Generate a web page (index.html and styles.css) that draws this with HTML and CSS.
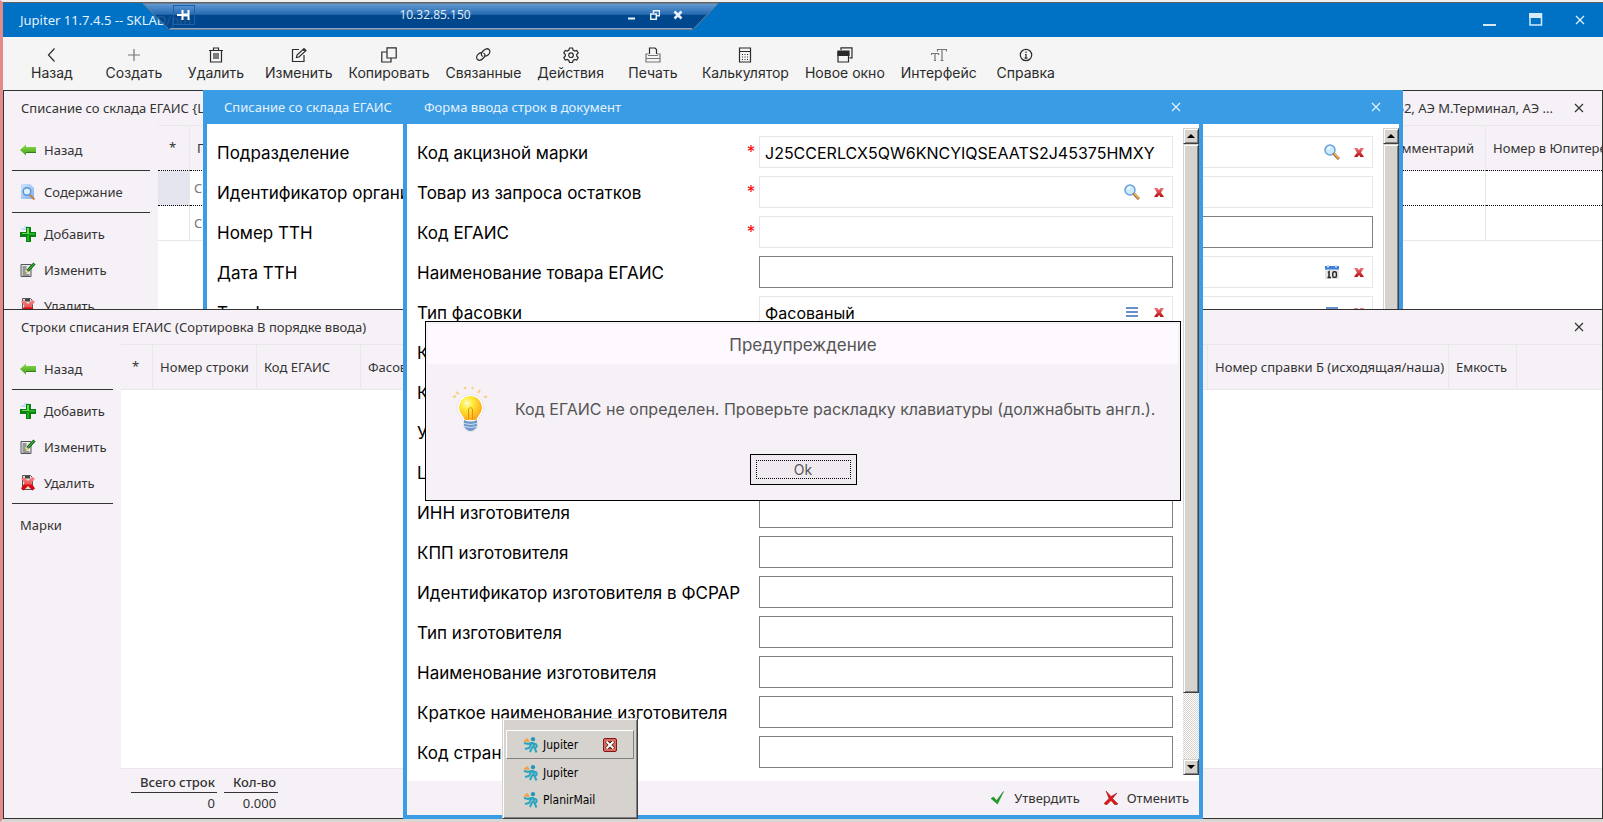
FILE: index.html
```html
<!DOCTYPE html>
<html lang="ru">
<head>
<meta charset="utf-8">
<title>Jupiter 11.7.4.5</title>
<link rel="stylesheet" href="styles.css">
</head>
<body>
<svg class="defs" aria-hidden="true">
  <linearGradient id="gGreen" x1="0" y1="0" x2="0" y2="1"><stop offset="0" stop-color="#8fe04a"/><stop offset="1" stop-color="#3f9a1c"/></linearGradient>
  <linearGradient id="gRed" x1="0" y1="0" x2="0" y2="1"><stop offset="0" stop-color="#f0787a"/><stop offset="1" stop-color="#b80a10"/></linearGradient>
  <linearGradient id="gDel" x1="0" y1="0" x2="0" y2="1"><stop offset="0" stop-color="#f48a8a"/><stop offset=".5" stop-color="#ee5558"/><stop offset=".6" stop-color="#e00c10"/><stop offset="1" stop-color="#c00808"/></linearGradient>
  <linearGradient id="gDoc" x1="0" y1="0" x2="1" y2="1"><stop offset="0" stop-color="#cfe3fb"/><stop offset="1" stop-color="#7fb2ee"/></linearGradient>
  <radialGradient id="gBulb" cx=".35" cy=".3" r=".8"><stop offset="0" stop-color="#fffbd0"/><stop offset=".3" stop-color="#ffee3c"/><stop offset="1" stop-color="#ff9d14"/></radialGradient>
  <symbol id="arrow" viewBox="0 0 16 16"><path d="M0 8 6 2.500V5h10v5.500H6V13.500z" fill="url(#gGreen)"/><path d="M6 10.500h10" stroke="#2f7d16"/></symbol>
  <symbol id="plus" viewBox="0 0 16 16"><path d="M1 3h4V1h4" fill="none" stroke="#c5e0f8" stroke-width="2"/><path d="M6 1h5v5h5v5h-5v5H6v-5H0V6h6z" fill="#0c7f12"/><path d="M7 2h2v6H2V7h5z" fill="#6bdc54"/><path d="M9 7h6v2H9v6H7V9h2z" fill="#1fb41f"/></symbol>
  <symbol id="edit" viewBox="0 0 16 16"><path d="M1 2.500h10V14.500H1z" fill="#e9e9e9" stroke="#555"/><path d="M2.500 5h4M2.500 7h4M2.500 9h3M2.500 11h4M2.500 13h7" stroke="#444"/><path d="M14.500 1.500 7.500 9" stroke="#156e18" stroke-width="3"/><path d="M14 2 8 8.500" stroke="#4cc24a"/><path d="M7.500 8.500 5.500 12l3.200-2z" fill="#f0c83c"/></symbol>
  <symbol id="remove" viewBox="0 0 16 16"><path d="M2.500 .5h8l2 2v12h-10z" fill="#e2e2e2" stroke="#555"/><path d="M5 1h5v2.500H5z" fill="#444"/><path d="M1 3.500 4 2l4 4 4-4 3 1.500L11.500 8l3.500 5.500-2.500 2L8 11l-4.500 4.500L1 13.500 4.500 8z" fill="url(#gDel)"/></symbol>
  <symbol id="doc" viewBox="0 0 16 16"><path d="M1 0h9l4 4v11H1z" fill="url(#gDoc)"/><circle cx="7" cy="7.500" r="3.800" fill="#e0effd" stroke="#5d93d2" stroke-width="1.500"/><path d="m10 11 4.500 4.500" stroke="#c9803a" stroke-width="2"/></symbol>
  <symbol id="search" viewBox="0 0 16 16"><circle cx="6" cy="6" r="5" fill="#cdeafe" stroke="#6ba3dc" stroke-width="1.500"/><path d="M3.500 5.500A3 3 0 0 1 6 3.500" stroke="#fff" stroke-width="1.500" fill="none"/><path d="m9.500 9.500 5.500 5.500" stroke="#9a6a3a" stroke-width="3"/><path d="m10 9.500 5 5" stroke="#f7b85a" stroke-width="1.500"/></symbol>
  <symbol id="cross" viewBox="0 0 10 9"><path d="M0 0h3.500L5 2 6.500 0H10L7 4.500 10 9H6.500L5 7 3.500 9H0l3-4.500z" fill="url(#gRed)"/></symbol>
  <symbol id="list" viewBox="0 0 12 10"><path d="M0 1h12M0 5h12M0 9h12" stroke="#6a8fd0" stroke-width="2"/></symbol>
  <symbol id="cal" viewBox="0 0 14 14"><path d="M0 1h14v13H0z" fill="#e4e6e4"/><path d="M0 1h14v3.500H0z" fill="#3c80dc"/><path d="M3 0v2.500M11 0v2.500" stroke="#c8dcf4" stroke-width="2"/><path d="M3 7.500l1-.7V12.500M2.500 12.500h3.500" fill="none" stroke="#222" stroke-width="1.500"/><rect x="7.800" y="6.800" width="3.600" height="5.600" rx="1.500" fill="none" stroke="#222" stroke-width="1.400"/></symbol>
  <symbol id="x" viewBox="0 0 10 10"><path d="m1 1 8 8M9 1 1 9" stroke="currentColor" stroke-width="1.200" fill="none"/></symbol>
  <symbol id="runner" viewBox="0 0 16 16"><path d="M0 4.500 4 1l2.500 2.500L6 5z" fill="#f0a24a"/><circle cx="10" cy="2.200" r="2.100" fill="#2596b4"/><path d="M1 6l4 1 3-1h2l1 2.500-2 2-2 4.500M8.500 6.500 6 11l-4 1M10.500 7c4-1 4 3.500 1 4l2 4.500" fill="none" stroke="#2aa5c0" stroke-width="2"/></symbol>
</svg>

<header class="titlebar">
  <h1 class="app-title">Jupiter 11.7.4.5 -- SKLAD/pm</h1>
  <div class="win-controls">
    <button aria-label="Свернуть"><svg width="14" height="14"><path d="M0 12h13" stroke="#d5e9fa" stroke-width="2"/></svg></button>
    <button aria-label="Развернуть"><svg width="14" height="14"><path d="M1 1h11.500v11H1z" fill="none" stroke="#d5eafb" stroke-width="1.500"/><path d="M0 0h13v5H0z" fill="#d5eafb"/></svg></button>
    <button aria-label="Закрыть"><svg width="10" height="10"><use href="#x"/></svg></button>
  </div>
</header>

<div class="rdp">
  <svg class="rdp-shape" viewBox="0 0 576 28" preserveAspectRatio="none" aria-hidden="true">
    <defs><linearGradient id="gRdp" x1="0" y1="0" x2="0" y2="1"><stop offset="0" stop-color="#76a3d7"/><stop offset=".42" stop-color="#2b68ae"/><stop offset=".44" stop-color="#003f82"/><stop offset="1" stop-color="#003f82"/></linearGradient></defs>
    <path d="M0 .5h575L550 26.500H26z" fill="url(#gRdp)" fill-opacity=".85" stroke="#6f7f92"/>
    <path d="M27 25.500h522" stroke="#86a8cf"/>
  </svg>
  <button class="rdp-pin" aria-label="Закрепить"><svg width="14" height="10"><path d="M0 5h5M5.500 0v10M11.500 0v10" stroke="#fff" stroke-width="2"/><path d="M6 5h6" stroke="#fff" stroke-width="3"/></svg></button>
  <span class="rdp-host">10.32.85.150</span>
  <div class="rdp-controls">
    <button aria-label="Свернуть сеанс"><svg width="10" height="10"><path d="M1 8.500h7" stroke="#eaf2fa" stroke-width="2"/></svg></button>
    <button aria-label="Восстановить сеанс"><svg width="10" height="10"><path d="M3.500 3V.8h6v5H7" fill="none" stroke="#eaf2fa" stroke-width="1.500"/><path d="M.7 4h5.600v5.300H.7z" fill="none" stroke="#eaf2fa" stroke-width="1.500"/></svg></button>
    <button aria-label="Закрыть сеанс"><svg width="10" height="10"><path d="m1.500 1.500 7 7M8.500 1.500l-7 7" stroke="#eaf2fa" stroke-width="2.500"/></svg></button>
  </div>
</div>

<nav class="toolbar">
  <button><svg viewBox="0 0 16 16"><path d="M10.500 1.500 4.500 8l6 6.500"/></svg>Назад</button>
  <button><svg viewBox="0 0 16 16"><path d="M8 2v12M2 8h12" class="soft"/></svg>Создать</button>
  <button><svg viewBox="0 0 16 16"><path d="M1 3.500h14M5.500 3V1h5v2M2.500 4v11h11V4M6 6v6M8 6v6M10 6v6"/></svg>Удалить</button>
  <button><svg viewBox="0 0 16 16"><path d="M8 2.500H1.500v12h11.500V8M5.500 10.500 6 8l7-6.500 2 2-7 6.500zM12 2.500l2 2"/></svg>Изменить</button>
  <button><svg viewBox="0 0 16 16"><path d="M6 .8h9.200V11H6zM5.500 5H.8v10H10v-3.500"/></svg>Копировать</button>
  <button><svg viewBox="0 0 16 16"><path d="M8 9.500C5.500 8.500 6 6 8 4s4.500-3 6-1.500 1 4-1 5.500-3 1.500-4 1M8.500 6c2 1 2 3 0 5s-4.500 3-6 1.500-1-4 1-5.500 2.500-1.500 3.500-1.200"/></svg>Связанные</button>
  <button><svg viewBox="0 0 16 16"><path d="m6.500 1h3l.6 2 1.600 1 2-.5 1.500 2.500-1.500 1.500v1.500l1.500 1.500-1.500 2.500-2-.5-1.600 1-.6 2h-3l-.6-2-1.600-1-2 .5L.8 10.500 2.300 9V7.500L.8 6l1.500-2.500 2 .5 1.600-1z"/><circle cx="8" cy="8.200" r="2.300"/></svg>Действия</button>
  <button><svg viewBox="0 0 16 16"><path d="M4.500 7V1H10l1.500 1.500V7"/><path d="M3.500 7H1v8h14V7h-3M3 8.500h10M1 11.500h14" class="soft"/></svg>Печать</button>
  <button><svg viewBox="0 0 16 16"><path d="M2.500 1h11v14h-11zM2.500 4.500h11"/><path d="M5 7.500h1M7.500 7.500h1M10 7.500h1M5 10h1M7.500 10h1M10 10h1M5 12.500h1M7.500 12.500h1M10 12.500h1"/></svg>Калькулятор</button>
  <button><svg viewBox="0 0 16 16"><path d="M4 3V.8h11v10h-2.500M1 5h10.500v10H1z"/><path d="M1 4h11v4.500H1z" fill="#2b2b2b"/></svg>Новое окно</button>
  <button><svg viewBox="0 0 16 16"><path d="M6.500 4.500v-2h9v2M11 2.500v11M9.500 13.500h3M.5 8V6.500h7V8M4 6.500v7M3 13.500h2" class="soft"/></svg>Интерфейс</button>
  <button><svg viewBox="0 0 16 16"><circle cx="8" cy="8" r="5.700"/><path d="M8 4.500V6M7 7.500h1v3.500M6.500 11.200h3"/></svg>Справка</button>
</nav>

<main class="desktop">
  <div class="upper">
    <section class="panel">
      <div class="panel-title"><h2>Списание со склада ЕГАИС {Ц</h2><span class="panel-sub">Б2, АЭ М.Терминал, АЭ ...</span><button class="close" aria-label="Закрыть"><svg width="10" height="10"><use href="#x"/></svg></button></div>
      <div class="panel-body">
        <nav class="side side-wide">
          <button><svg><use href="#arrow"/></svg>Назад</button>
          <hr>
          <button><svg><use href="#doc"/></svg>Содержание</button>
          <hr>
          <button><svg><use href="#plus"/></svg>Добавить</button>
          <button><svg><use href="#edit"/></svg>Изменить</button>
          <button><svg><use href="#remove"/></svg>Удалить</button>
        </nav>
        <div class="grid-area">
          <table class="grid grid-upper">
            <colgroup><col class="c-mark"><col class="c-wide"><col><col class="c-wide"><col class="c-num"></colgroup>
            <thead><tr><th class="star">*</th><th>П</th><th></th><th class="right">Комментарий</th><th>Номер в Юпитере</th></tr></thead>
            <tbody>
              <tr class="current"><td class="sel"></td><td>С</td><td></td><td></td><td></td></tr>
              <tr><td></td><td>С</td><td></td><td></td><td></td></tr>
            </tbody>
          </table>
        </div>
      </div>
    </section>

    <section class="window window-back">
      <div class="window-title"><h2>Списание со склада ЕГАИС</h2><button class="close" aria-label="Закрыть"><svg width="10" height="10"><use href="#x"/></svg></button></div>
      <div class="window-body">
        <form class="form">
          <div class="row"><label for="b1">Подразделение</label><div class="field locked"><input id="b1" readonly><button type="button" aria-label="Найти"><svg class="i16"><use href="#search"/></svg></button><button type="button" aria-label="Очистить"><svg class="i10"><use href="#cross"/></svg></button></div></div>
          <div class="row"><label for="b2">Идентификатор организации</label><div class="field locked"><input id="b2" readonly></div></div>
          <div class="row"><label for="b3">Номер ТТН</label><div class="field"><input id="b3"></div></div>
          <div class="row"><label for="b4">Дата ТТН</label><div class="field locked"><input id="b4" readonly><button type="button" aria-label="Календарь"><svg class="i14"><use href="#cal"/></svg></button><button type="button" aria-label="Очистить"><svg class="i10"><use href="#cross"/></svg></button></div></div>
          <div class="row"><label for="b5">Тип ф</label><div class="field locked"><input id="b5" readonly><button type="button" aria-label="Список"><svg class="i12"><use href="#list"/></svg></button><button type="button" aria-label="Очистить"><svg class="i10"><use href="#cross"/></svg></button></div></div>
        </form>
        <div class="scroll"><span class="sb up"></span><span class="thumb"></span></div>
      </div>
    </section>
  </div>

  <section class="panel lower">
    <div class="panel-title"><h2>Строки списания ЕГАИС (Сортировка В порядке ввода)</h2><button class="close" aria-label="Закрыть"><svg width="10" height="10"><use href="#x"/></svg></button></div>
    <div class="panel-body">
      <nav class="side side-narrow">
        <button><svg><use href="#arrow"/></svg>Назад</button>
        <hr>
        <button><svg><use href="#plus"/></svg>Добавить</button>
        <button><svg><use href="#edit"/></svg>Изменить</button>
        <button><svg><use href="#remove"/></svg>Удалить</button>
        <hr>
        <button>Марки</button>
      </nav>
      <div class="grid-area">
        <table class="grid">
          <colgroup><col class="c-mark"><col class="c-mid"><col class="c-mid"><col><col class="c-ref"><col class="c-cap"><col class="c-end"></colgroup>
          <thead><tr><th class="star">*</th><th>Номер строки</th><th>Код ЕГАИС</th><th>Фасовка</th><th>Номер справки Б (исходящая/наша)</th><th>Емкость</th><th class="last"></th></tr></thead>
        </table>
        <div class="totals">
          <dl><dt>Всего строк</dt><dd>0</dd></dl>
          <dl><dt>Кол-во</dt><dd>0.000</dd></dl>
        </div>
      </div>
    </div>
  </section>

  <section class="window window-front">
    <div class="window-title"><h2>Форма ввода строк в документ</h2><button class="close" aria-label="Закрыть"><svg width="10" height="10"><use href="#x"/></svg></button></div>
    <div class="window-body">
      <form class="form">
        <div class="row"><label for="f1">Код акцизной марки</label><i class="req">*</i><div class="field locked"><input id="f1" value="J25CCERLCX5QW6KNCYIQSEAATS2J45375HMXY"></div></div>
        <div class="row"><label for="f2">Товар из запроса остатков</label><i class="req">*</i><div class="field locked"><input id="f2" readonly><button type="button" aria-label="Найти"><svg class="i16"><use href="#search"/></svg></button><button type="button" aria-label="Очистить"><svg class="i10"><use href="#cross"/></svg></button></div></div>
        <div class="row"><label for="f3">Код ЕГАИС</label><i class="req">*</i><div class="field locked"><input id="f3" readonly></div></div>
        <div class="row"><label for="f4">Наименование товара ЕГАИС</label><div class="field"><input id="f4"></div></div>
        <div class="row"><label for="f5">Тип фасовки</label><div class="field locked"><input id="f5" value="Фасованый"><button type="button" aria-label="Список"><svg class="i12"><use href="#list"/></svg></button><button type="button" aria-label="Очистить"><svg class="i10"><use href="#cross"/></svg></button></div></div>
        <div class="row"><label for="f6">К</label><div class="field"><input id="f6"></div></div>
        <div class="row"><label for="f7">К</label><div class="field"><input id="f7"></div></div>
        <div class="row"><label for="f8">У</label><div class="field"><input id="f8"></div></div>
        <div class="row"><label for="f9">Ц</label><div class="field"><input id="f9"></div></div>
        <div class="row"><label for="f10">ИНН изготовителя</label><div class="field"><input id="f10"></div></div>
        <div class="row"><label for="f11">КПП изготовителя</label><div class="field"><input id="f11"></div></div>
        <div class="row"><label for="f12">Идентификатор изготовителя в ФСРАР</label><div class="field"><input id="f12"></div></div>
        <div class="row"><label for="f13">Тип изготовителя</label><div class="field"><input id="f13"></div></div>
        <div class="row"><label for="f14">Наименование изготовителя</label><div class="field"><input id="f14"></div></div>
        <div class="row"><label for="f15">Краткое наименование изготовителя</label><div class="field"><input id="f15"></div></div>
        <div class="row"><label for="f16">Код страны</label><div class="field"><input id="f16"></div></div>
      </form>
      <div class="scroll"><span class="sb up"></span><span class="thumb"></span><span class="track"></span><span class="sb down"></span></div>
    </div>
    <footer class="window-foot">
      <button><svg width="14" height="14"><path d="M0 7.500 2.500 6 5.500 9.500 12.500.5 6.500 13z" fill="#1fa022" stroke="#0f7a18" stroke-width=".5"/></svg>Утвердить</button>
      <button><svg width="14" height="14"><path d="M2 0 7 5.500 13 2 8.500 7.500 14 13l-3 1-4-4.500L2.500 14 0 12.500 5 7.500z" fill="#e0161a" stroke="#8a0c0c" stroke-width=".5"/></svg>Отменить</button>
    </footer>
  </section>

  <div class="dialog" role="alertdialog" aria-labelledby="dlg">
    <h2 id="dlg">Предупреждение</h2>
    <div class="dialog-main">
      <svg width="36" height="48" viewBox="0 0 36 48"><path d="M18.500 9.500a13 13 0 0 0-9.500 22l2.500 5v6l3.500 4h7l3.500-4v-6l2.500-5a13 13 0 0 0-9.500-22z" fill="#fff" stroke="#dcd8de" stroke-width=".6"/><path d="M18.500 11a11.500 11.500 0 0 0-8.500 19l3 5h11l3-5a11.500 11.500 0 0 0-8.500-19z" fill="url(#gBulb)"/><path d="M16.500 34V24q2-3 4 0v10" fill="none" stroke="#e28f16"/><path d="M12 35q6.500 3 13 0v7l-3 3q-3.500 2-7 0l-3-3z" fill="#6f97c8"/><path d="M12 38.500q6.500 2 13 0M12 41.500q6.500 2 13 0" fill="none" stroke="#d0e0f2"/><path d="m1 12 3-1M4 7l3 2M12.500 2l1.500 2M21 2l-1 2M28 5l-2 3M32 12l3-.5" stroke="#f8cd7c" stroke-width="2" fill="none"/></svg>
      <p>Код ЕГАИС не определен. Проверьте раскладку клавиатуры (должнабыть англ.).</p>
    </div>
    <button class="ok"><span>Ok</span></button>
  </div>

  <div class="tasks" role="menu">
    <div class="task active"><svg><use href="#runner"/></svg><span>Jupiter</span><button aria-label="Закрыть окно"><svg width="10" height="8"><path d="m1.500 0 7 8M8.500 0l-7 8" stroke="#4a2024" stroke-width="4"/><path d="m1.500.5 7 7M8.500.5l-7 7" stroke="#fff" stroke-width="2"/></svg></button></div>
    <div class="task"><svg><use href="#runner"/></svg><span>Jupiter</span></div>
    <div class="task"><svg><use href="#runner"/></svg><span>PlanirMail</span></div>
  </div>
</main>
</body>
</html>
```
FILE: styles.css
```css
* { box-sizing: border-box; }

body {
  margin: 0;
  height: 100vh;
  display: flex;
  flex-direction: column;
  position: relative;
  overflow: hidden;
  border-left: 3px solid #e38a8a;
  border-top: 2px solid #f0f0f0;
  border-bottom: 3px solid #d9d7d4;
  font: 13px/20px "Noto Sans", "Open Sans", sans-serif;
  color: #333;
  background: #fff;
}

.defs { position: absolute; width: 0; height: 0; }

button {
  border: 0;
  padding: 0;
  background: none;
  font: inherit;
  color: inherit;
}

h1, h2, p, dl, dd { margin: 0; font-size: inherit; font-weight: normal; }

/* Application title bar */
.titlebar {
  display: flex;
  align-items: center;
  justify-content: space-between;
  height: 35px;
  padding: 0 18px 0 17px;
  border-top: 1px solid #5f6163;
  background: #0072c6;
  color: #e4f1fb;
}
.win-controls { display: flex; gap: 32px; }
.win-controls button { display: flex; align-items: center; }

/* Remote session bar floats over the title bar */
.rdp {
  position: absolute;
  z-index: 1;
  top: 1px;
  left: 140px;
  width: 576px;
  height: 28px;
  display: flex;
  align-items: center;
  padding: 0 36px 4px 30px;
  color: #e6eef8;
  font: 12px/16px "Open Sans", sans-serif;
}
.rdp-shape { position: absolute; inset: 0; width: 100%; height: 100%; z-index: -1; }
.rdp-pin {
  display: flex;
  align-items: center;
  justify-content: center;
  width: 22px;
  height: 20px;
  border: 1px solid #1c62b2;
}
.rdp-host { flex: 1; text-align: center; padding-left: 48px; }
.rdp-controls { display: flex; gap: 13px; }
.rdp-controls button { display: flex; }

/* Main toolbar */
.toolbar {
  display: flex;
  height: 53px;
  flex: none;
  padding-left: 8px;
  background: #f5f5f5;
  color: #2b2b2b;
  font-family: Inter, "Noto Sans", sans-serif;
  font-size: 14px;
}
.toolbar button {
  display: flex;
  flex-direction: column;
  align-items: center;
  min-width: 82px;
  padding: 10px 8px 0;
  white-space: nowrap;
}
.toolbar svg {
  width: 16px;
  height: 16px;
  fill: none;
  stroke: #2b2b2b;
  stroke-width: 1.2;
}
.toolbar .soft { stroke: #777; }

/* Desktop and docked panels */
.desktop {
  position: relative;
  flex: 1;
  min-height: 0;
  display: flex;
  flex-direction: column;
}
.upper {
  position: relative;
  height: 219px;
  flex: none;
  overflow: hidden;
  display: flex;
}
.panel {
  flex: 1;
  min-width: 0;
  display: flex;
  flex-direction: column;
  border: 1px solid #333;
  border-bottom: 0;
  background: #f6f1f6;
}
.lower { border-bottom: 1px solid #333; }
.panel-title {
  display: flex;
  align-items: center;
  height: 34px;
  flex: none;
  padding: 0 18px 0 17px;
}
.panel-title h2 { flex: 1; }
.panel-sub { padding-right: 21px; }
.close { display: flex; align-items: center; }
.panel-body { flex: 1; display: flex; min-height: 0; }

.side { padding: 7px 8px 0; flex: none; }
.side-wide { width: 154px; }
.side-narrow { width: 117px; }
.side button {
  display: flex;
  align-items: center;
  gap: 8px;
  width: 100%;
  height: 36px;
  padding-left: 8px;
}
.side svg { width: 16px; height: 16px; }
.side hr { margin: 2px 0 3px; border: 0; border-top: 1px solid #333; }

.grid-area { flex: 1; min-width: 0; display: flex; flex-direction: column; background: #fff; }
.grid {
  width: 100%;
  table-layout: fixed;
  border-collapse: separate;
  border-spacing: 0;
}
.grid th, .grid td {
  padding: 0 7px;
  overflow: hidden;
  white-space: nowrap;
  text-align: left;
  font-weight: normal;
  border-right: 1px solid #e9e7ea;
}
.grid th {
  height: 46px;
  border-top: 1px solid #e9e7ea;
  border-bottom: 1px solid #e9e7ea;
  background: #f6f1f6;
}
.grid td { height: 35px; color: #777; padding-left: 4px; border-bottom: 1px solid #e9e7ea; }
.grid .star { text-align: center; padding: 0 9px 2px 7px; }
.grid .right { text-align: right; padding-right: 11px; }
.grid th:last-child, .grid td:last-child { border-right: 0; padding-right: 0; }
.grid-upper th { border-bottom: 1px dotted #000; }
.grid .current td { border-bottom: 1px dotted #000; }
.grid .sel { background: #e5e5f0; }
.c-mark { width: 32px; }
.c-mid { width: 104px; }
.c-wide { width: 120px; }
.c-num { width: 116px; }
.c-ref { width: 241px; }
.c-cap { width: 68px; }
.c-end { width: 85px; }

.totals {
  display: flex;
  gap: 7px;
  margin-top: auto;
  height: 50px;
  padding: 3px 10px 0;
  border-top: 1px solid #e9e7ea;
  background: #f6f1f6;
}
.totals dl { text-align: right; }
.totals dt { padding: 0 2px 0 9px; border-bottom: 1px solid #333; font-weight: 500; }
.totals dd { padding-right: 2px; }

/* Floating windows */
.window {
  position: absolute;
  display: flex;
  flex-direction: column;
  border: 4px solid #3a9ce5;
  border-top: 0;
  background: #fff;
}
.window-back { top: 0; left: 200px; right: 200px; height: 480px; }
.window-front { top: 0; left: 400px; right: 400px; bottom: 0; }
.window-title {
  display: flex;
  align-items: center;
  justify-content: space-between;
  height: 34px;
  flex: none;
  padding: 0 18px 0 17px;
  background: #3a9ce5;
  color: #e4f2fd;
}
.window-body { flex: 1; min-height: 0; display: flex; }
.form {
  flex: 1;
  display: flex;
  flex-direction: column;
  gap: 8px;
  padding: 12px 10px;
  color: #000;
  font-family: Inter, "Noto Sans", sans-serif;
  font-size: 17px;
}
.row { display: grid; grid-template-columns: 326px 16px 1fr; align-items: center; height: 32px; flex: none; }
.row label { white-space: nowrap; padding-top: 1px; }
.req { color: #f00; font-style: normal; text-align: center; }
.field {
  grid-column: 3;
  display: flex;
  align-items: center;
  height: 32px;
  padding-right: 5px;
  border: 1px solid #808080;
}
.locked { border-color: #e8e6e8; }
.field input {
  flex: 1;
  min-width: 0;
  border: 0;
  outline: 0;
  padding: 1px 0 0 5px;
  background: none;
  font: inherit;
  font-size: 16px;
  color: #000;
}
.field button { display: flex; justify-content: center; width: 16px; margin-left: 11px; }
.i16 { width: 16px; height: 16px; }
.i14 { width: 14px; height: 14px; }
.i12 { width: 12px; height: 10px; }
.i10 { width: 10px; height: 9px; }

.scroll { width: 16px; margin: 4px 0 6px; display: flex; flex-direction: column; flex: none; }
.sb, .thumb {
  background: #d6d3ce;
  border: 1px solid #d6d3ce;
  border-right: 1px solid #404040;
  border-bottom: 1px solid #404040;
  box-shadow: inset 1px 1px #fff, inset -1px -1px #808080;
}
.sb { height: 16px; display: flex; align-items: center; justify-content: center; }
.sb::after { content: ""; border: 4px solid transparent; border-top-width: 0; border-bottom-color: #000; }
.down::after { border-top: 4px solid #000; border-bottom: 0; }
.thumb { flex: 549; }
.track { flex: 66; background: repeating-conic-gradient(#fff 0 25%, #d6d3ce 0 50%) 0 0 / 2px 2px; }

.window-foot {
  display: flex;
  justify-content: flex-end;
  align-items: center;
  gap: 24px;
  height: 34px;
  flex: none;
  padding-right: 10px;
  background: #f6f1f6;
}
.window-foot button { display: flex; align-items: center; gap: 9px; }

/* Warning dialog */
.dialog {
  position: absolute;
  top: 231px;
  left: 422px;
  right: 422px;
  height: 180px;
  display: flex;
  flex-direction: column;
  align-items: center;
  padding: 2px;
  border: 1px solid #000;
  background: #f6f1f6;
  color: #555;
  font-family: Inter, "Noto Sans", sans-serif;
  font-size: 16px;
}
.dialog h2 {
  align-self: stretch;
  height: 40px;
  line-height: 42px;
  text-align: center;
  font-size: 17px;
  background: #fdf9ff;
}
.dialog-main { flex: 1; align-self: stretch; display: flex; align-items: center; gap: 27px; padding-left: 24px; }
.dialog-main p { white-space: nowrap; }
.ok {
  width: 107px;
  height: 31px;
  margin-bottom: 13px;
  padding: 5px;
  border: 1px solid #000;
  background: #efeaef;
  font-size: 14px;
}
.ok span { display: block; height: 19px; line-height: 17px; border: 1px dotted #000; }

/* Taskbar group list */
.tasks {
  position: absolute;
  left: 499px;
  bottom: 0;
  width: 136px;
  display: flex;
  flex-direction: column;
  padding: 11px 3px 5px;
  border: 1px solid #d6d3ce;
  border-right-color: #404040;
  border-bottom-color: #404040;
  box-shadow: inset 1px 1px #fff, inset -1px -1px #808080;
  background: #d6d3ce;
  color: #000;
  font: 12px/16px "DejaVu Sans Condensed", "Liberation Sans", sans-serif;
}
.task { display: flex; align-items: center; gap: 4px; height: 27px; padding: 0 17px; }
.task svg { width: 16px; height: 16px; flex: none; }
.task span { flex: 1; }
.active { height: 29px; padding: 0 16px; border: 1px solid; border-color: #fff #808080 #808080 #fff; }
.task button {
  display: flex;
  align-items: center;
  justify-content: center;
  width: 14px;
  height: 14px;
  border: 1px solid #7a1a1c;
  border-radius: 2px;
  background: #e06a5c;
}
.task button svg { width: 10px; height: 8px; }
```
